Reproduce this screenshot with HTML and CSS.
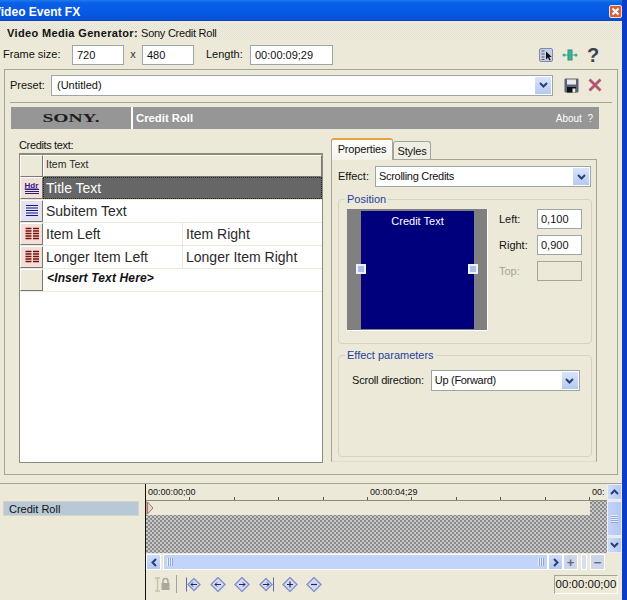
FILE: index.html
```html
<!DOCTYPE html>
<html lang="en">
<head>
<meta charset="utf-8">
<title>Video Event FX</title>
<link rel="stylesheet" href="styles.css">
</head>
<body>
<div class="app">
  <header class="titlebar">
    <span class="title">Video Event FX</span>
    <span class="close"><svg width="13" height="13" viewBox="0 0 13 13"><path d="M3.500 3.500l6 6M9.500 3.500l-6 6" stroke="#fff" stroke-width="2.200" fill="none"/></svg></span>
  </header>
  <div class="gen-band"><b>Video Media Generator:</b> <span class="gen-name">Sony Credit Roll</span></div>
  <div class="frame-row">
    <span class="lbl-frame">Frame size:</span>
    <span class="input w-52">720</span>
    <span class="times">x</span>
    <span class="input w-52">480</span>
    <span class="lbl-length">Length:</span>
    <span class="input w-83">00:00:09;29</span>
    <span class="frame-icons">
      <svg width="14" height="14" viewBox="0 0 14 14"><rect x=".5" y=".5" width="13" height="13" rx="1.500" fill="#c7cfe6" stroke="#7f8ab0"/><path d="M2.500 3h3M2.500 6h3M2.500 9h3M2.500 11.500h3" stroke="#556" fill="none"/><path d="M7 3.500v8l2-2 1.400 3 1.200-.6-1.300-2.800h2.500z" fill="#111"/></svg>
      <svg width="16" height="12" viewBox="0 0 16 12"><rect x="6" y="1" width="4" height="10" fill="#3fb596" stroke="#2a9478"/><path d="M1 6h14" stroke="#3fa68c"/><circle cx="2" cy="6" r="1.500" fill="#3fa68c"/><circle cx="14" cy="6" r="1.500" fill="#3fa68c"/></svg>
      <span class="help">?</span>
    </span>
  </div>
  <main class="panel">
    <div class="preset-row">
      <span class="lbl-preset">Preset:</span>
      <span class="combo combo-preset">(Untitled)<span class="drop"><svg width="9" height="6" viewBox="0 0 9 6"><path d="M1 1l3.500 3.500L8 1" stroke="#2b3f73" stroke-width="2" fill="none"/></svg></span></span>
      <svg class="icon-save" width="15" height="15" viewBox="0 0 15 15"><path d="M.5 1.500a1 1 0 0 1 1-1h12a1 1 0 0 1 1 1v12a1 1 0 0 1-1 1h-12a1 1 0 0 1-1-1z" fill="#5b6476"/><rect x="3" y="1.500" width="9" height="5" fill="#e9e9ee"/><rect x="3" y="9" width="9" height="5.500" fill="#111"/><rect x="8.500" y="10.500" width="3" height="4" fill="#eee"/></svg>
      <svg class="icon-x" width="14" height="14" viewBox="0 0 14 14"><path d="M1.500 1.500l11 11M12.500 1.500l-11 11" stroke="#b0566f" stroke-width="2.800" fill="none"/></svg>
    </div>
    <div class="rule"></div>
    <div class="sony-bar">
      <span class="sony-logo"><span class="sony-word">SONY.</span></span>
      <span class="sony-title">Credit Roll</span>
      <span class="sony-about">About &nbsp;?</span>
    </div>
    <div class="columns">
      <section class="credits">
        <div class="credits-label">Credits text:</div>
        <div class="grid">
          <div class="row row-head"><span class="rh"></span><span class="cell head">Item Text</span></div>
          <div class="row row-sel"><span class="rh rh-pink"><svg width="16" height="16" viewBox="0 0 16 16"><text x="0.500" y="7.500" class="hdr">Hdr</text><path d="M1 9.500h14M1 11.500h14M1 13.500h14" stroke="#2a1c88" fill="none"/></svg></span><span class="cell sel">Title Text</span></div>
          <div class="row"><span class="rh rh-blue"><svg width="16" height="16" viewBox="0 0 16 16"><path d="M2 2.500h12M2 5h12M2 7.500h12M2 10h12M2 12.500h12" stroke="#14148c" fill="none"/></svg></span><span class="cell">Subitem Text</span></div>
          <div class="row"><span class="rh rh-pink"><svg width="16" height="16" viewBox="0 0 16 16"><path d="M1.500 2.500h6M1.500 5h6M1.500 7.500h6M1.500 10h6M1.500 12.500h6M9 2.500h6M9 5h6M9 7.500h6M9 10h6M9 12.500h6" stroke="#7a1008" stroke-width="1.300" fill="none"/></svg></span><span class="cell c1">Item Left</span><span class="cell c2">Item Right</span></div>
          <div class="row"><span class="rh rh-pink"><svg width="16" height="16" viewBox="0 0 16 16"><path d="M1.500 2.500h6M1.500 5h6M1.500 7.500h6M1.500 10h6M1.500 12.500h6M9 2.500h6M9 5h6M9 7.500h6M9 10h6M9 12.500h6" stroke="#7a1008" stroke-width="1.300" fill="none"/></svg></span><span class="cell c1">Longer Item Left</span><span class="cell c2">Longer Item Right</span></div>
          <div class="row"><span class="rh"></span><span class="cell insert">&lt;Insert Text Here&gt;</span></div>
        </div>
      </section>
      <section class="props">
        <div class="tabs">
          <span class="tab tab-on">Properties</span>
          <span class="tab">Styles</span>
        </div>
        <div class="tab-body">
          <div class="effect-row">
            <span class="lbl-effect">Effect:</span>
            <span class="combo combo-effect">Scrolling Credits<span class="drop"><svg width="9" height="6" viewBox="0 0 9 6"><path d="M1 1l3.500 3.500L8 1" stroke="#2b3f73" stroke-width="2" fill="none"/></svg></span></span>
          </div>
          <fieldset class="group group-pos">
            <legend>Position</legend>
            <div class="pos-inner">
              <div class="preview">
                <div class="screen">Credit Text</div>
                <span class="handle handle-l"></span>
                <span class="handle handle-r"></span>
              </div>
              <div class="pos-fields">
                <label class="field"><span>Left:</span><span class="input small">0,100</span></label>
                <label class="field"><span>Right:</span><span class="input small">0,900</span></label>
                <label class="field disabled"><span>Top:</span><span class="input small off"></span></label>
              </div>
            </div>
          </fieldset>
          <fieldset class="group group-params">
            <legend>Effect parameters</legend>
            <div class="scroll-row">
              <span class="lbl-scroll">Scroll direction:</span>
              <span class="combo combo-scroll">Up (Forward)<span class="drop"><svg width="9" height="6" viewBox="0 0 9 6"><path d="M1 1l3.500 3.500L8 1" stroke="#2b3f73" stroke-width="2" fill="none"/></svg></span></span>
            </div>
          </fieldset>
        </div>
      </section>
    </div>
  </main>
  <section class="timeline">
    <aside class="tracks"><div class="track-name">Credit Roll</div></aside>
    <div class="tl-main">
      <div class="tl-top">
        <div class="tl-view">
          <div class="ruler"><span class="mark">00:00:00;00</span><span class="mark">00:00:04;29</span><span class="mark mark-end">00:</span></div>
          <div class="track"><div class="clip"><svg class="cursor" width="7" height="14" viewBox="0 0 7 14"><path d="M.5 1l5.500 6-5.500 6z" fill="#e4d6c4" stroke="#a07a66"/></svg></div></div>
        </div>
        <div class="vscroll">
          <span class="sbtn"><svg width="9" height="6" viewBox="0 0 9 6"><path d="M1 5l3.500-3.500L8 5" stroke="#2b3f73" stroke-width="2" fill="none"/></svg></span>
          <span class="vthumb"></span>
          <span class="sbtn"><svg width="9" height="6" viewBox="0 0 9 6"><path d="M1 1l3.500 3.500L8 1" stroke="#2b3f73" stroke-width="2" fill="none"/></svg></span>
        </div>
      </div>
      <div class="hscroll">
        <span class="hbtn"><svg width="6" height="9" viewBox="0 0 6 9"><path d="M5 1L1.500 4.500 5 8" stroke="#2b3f73" stroke-width="2" fill="none"/></svg></span>
        <span class="hthumb"></span>
        <span class="hbtn"><svg width="6" height="9" viewBox="0 0 6 9"><path d="M1 1l3.500 3.500L1 8" stroke="#2b3f73" stroke-width="2" fill="none"/></svg></span>
        <span class="hbtn zoom">+</span>
        <span class="hsplit"></span>
        <span class="hbtn zoom">&minus;</span>
      </div>
      <div class="tl-tools">
        <svg class="lock" width="17" height="15" viewBox="0 0 17 15"><path d="M1 1h5M1 14h5M3.500 1v13" stroke="#c6c3b4" stroke-width="1.500" fill="none"/><path d="M9 6V4a2.500 2.500 0 0 1 5 0v2" stroke="#aaa89c" stroke-width="1.500" fill="none"/><rect x="7.500" y="6" width="8" height="7" fill="#aaa89c"/></svg>
        <span class="tool-sep"></span>
        <svg class="nav" width="16" height="15" viewBox="0 0 16 15"><path d="M.5 .5v14" stroke="#5c6ab0"/><path d="M8 1.500l6 6-6 6-6-6z" fill="#d3d9f2" stroke="#8390cc" stroke-width="1.300"/><path d="M11 7.500H5M7 5.500l-2 2 2 2" stroke="#1f2a58" fill="none"/></svg>
        <svg class="nav" width="16" height="15" viewBox="0 0 16 15"><path d="M8 .5l7 7-7 7-7-7z" fill="#d3d9f2" stroke="#8390cc" stroke-width="1.300"/><path d="M11 7.500H5M7 5.500l-2 2 2 2" stroke="#1f2a58" fill="none"/></svg>
        <svg class="nav" width="16" height="15" viewBox="0 0 16 15"><path d="M8 .5l7 7-7 7-7-7z" fill="#d3d9f2" stroke="#8390cc" stroke-width="1.300"/><path d="M5 7.500h6M9 5.500l2 2-2 2" stroke="#1f2a58" fill="none"/></svg>
        <svg class="nav" width="16" height="15" viewBox="0 0 16 15"><path d="M15.500 .5v14" stroke="#5c6ab0"/><path d="M8 1.500l6 6-6 6-6-6z" fill="#d3d9f2" stroke="#8390cc" stroke-width="1.300"/><path d="M5 7.500h6M9 5.500l2 2-2 2" stroke="#1f2a58" fill="none"/></svg>
        <svg class="nav" width="16" height="15" viewBox="0 0 16 15"><path d="M8 .5l7 7-7 7-7-7z" fill="#d3d9f2" stroke="#8390cc" stroke-width="1.300"/><path d="M5 7.500h6M8 4.500v6" stroke="#1f2a58" stroke-width="1.200" fill="none"/></svg>
        <svg class="nav" width="16" height="15" viewBox="0 0 16 15"><path d="M8 .5l7 7-7 7-7-7z" fill="#d3d9f2" stroke="#8390cc" stroke-width="1.300"/><path d="M5 7.500h6" stroke="#1f2a58" stroke-width="1.200" fill="none"/></svg>
        <span class="timecode">00:00:00;00</span>
      </div>
    </div>
  </section>
</div>
</body>
</html>
```
FILE: styles.css
```css
* { box-sizing: border-box; }
html, body { margin: 0; padding: 0; }
body {
  width: 627px; height: 600px; overflow: hidden;
  background: #ece9d8; color: #111;
  font: 11px/13px "Liberation Sans", Arial, sans-serif;
}
.app { width: 627px; height: 600px; border-right: 5px solid #0a3cc8; display: flex; flex-direction: column; overflow: hidden; }
.titlebar {
  height: 21px; margin-right: -5px; flex: none; display: flex; align-items: center; justify-content: space-between;
  padding: 0 5px 0 0;
  background: linear-gradient(#1d7cf0 0, #0a5fe6 3px, #0558e4 14px, #0a4fd2 20px, #0a3cc0 21px);
}
.title { margin-left: -7px; color: #fff; font: bold 12px/16px "Liberation Sans", sans-serif; margin-top: 2px; }
.close { width: 13px; height: 13px; margin-top: 2px; border: 1px solid #f0e0dc; border-radius: 2px; background: #d8603a; display: flex; align-items: center; justify-content: center; }
.close svg { flex: none; }
.gen-band {
  flex: none; padding: 3px 0 0 7px; line-height: 15px; font-size: 11px;
  background: repeating-conic-gradient(#e2dfcc 0 25%, #f2efe4 0 50%) 0 0 / 2px 2px;
  margin-top: 2px; height: 17px;
}
.gen-band b { letter-spacing: .35px; }
.gen-name { letter-spacing: -.25px; }
.frame-row { height: 29px; flex: none; display: flex; align-items: flex-start; padding: 5px 0 0 3px; line-height: 19px; }
.input { display: block; height: 20px; background: #fff; border: 1px solid #9da6a6; padding-left: 4px; line-height: 18px; color: #111; }
.w-52 { width: 52px; }
.w-83 { width: 83px; }
.lbl-frame { width: 69px; }
.times { width: 18px; text-align: center; color: #333; }
.lbl-length { margin-left: 12px; width: 44px; }
.frame-icons { margin-left: 206px; display: flex; align-items: center; height: 20px; }
.frame-icons svg:first-child { margin-right: 9px; }
.help { margin-left: 9px; font: bold 20px/20px "Liberation Sans", sans-serif; color: #3b4252; }
.panel { width: 614px; height: 406px; flex: none; margin-left: 4px; border: 1px solid #a3a598; padding: 5px 5px 0 5px; }
.preset-row { height: 20px; display: flex; align-items: center; }
.lbl-preset { width: 41px; }
.combo { display: flex; align-items: center; justify-content: space-between; height: 21px; background: #fff; border: 1px solid #9da6a6; padding: 0 1px 0 3px; letter-spacing: -.3px; }
.combo-preset { width: 502px; letter-spacing: 0; padding-left: 5px; }
.drop { width: 16px; height: 17px; background: linear-gradient(#d9e5fb, #b5c9f2); display: flex; align-items: center; justify-content: center; }
.icon-save { margin-left: 11px; }
.icon-x { margin-left: 9px; }
.rule { height: 1px; background: #a3a598; margin: 7px 0 4px 0; width: 602px; }
.sony-bar { width: 588px; height: 22px; margin-left: 1px; display: flex; align-items: center; background: #969696; color: #fff; }
.sony-logo { width: 122px; height: 22px; flex: none; border-right: 2px solid #fff; text-align: center; color: #1c1c1c; font: bold 13px/22px "Liberation Serif", serif; }
.sony-word { display: inline-block; transform: scaleX(1.5); }
.sony-title { margin-left: 3px; padding-top: 1px; font-weight: bold; font-size: 11.300px; flex: 1; }
.sony-about { margin-right: 6px; font-size: 10px; }
.columns { display: flex; align-items: flex-start; margin-top: 10px; }
.credits { width: 305px; margin-left: 9px; flex: none; }
.credits-label { height: 14px; line-height: 13px; letter-spacing: -.35px; }
.grid { width: 304px; height: 310px; background: #fff; border: 1px solid #8c8c7c; border-top: 2px solid #8c8c7c; }
.row { height: 23px; display: flex; border-bottom: 1px solid #ece9d8; }
.row-head { height: 22px; border-bottom: 0; }
.rh { width: 23px; flex: none; background: #ece9d8; border: 1px solid #fff; border-right-color: #777; border-bottom-color: #777; display: flex; align-items: center; justify-content: center; }
.rh-pink { background: #f2dfd8; }
.rh-blue { background: #e4e2ee; }
.rh svg { flex: none; }
.hdr { font: bold 8px "Liberation Sans", sans-serif; fill: #2a1c88; text-decoration: underline; }
.cell { display: block; padding-left: 3px; font-size: 14px; line-height: 22px; color: #2a2a2a; flex: 1; }
.head { background: #ece9d8; border: 1px solid #fff; border-right-color: #777; border-bottom-color: #777; padding-left: 2px; font-size: 10.500px; line-height: 17px; }
.sel { background: #666; color: #fff; outline: 1px dotted #222; outline-offset: -1px; }
.c1 { flex: none; width: 140px; border-right: 1px solid #ece9d8; }
.insert { font: italic bold 12px/18px "Liberation Sans", sans-serif; letter-spacing: .15px; padding-left: 4px; color: #111; }
.props { width: 267px; margin-left: 7px; flex: none; }
.tabs { display: flex; height: 20px; align-items: flex-end; position: relative; z-index: 1; }
.tab { height: 18px; padding-top: 2px; line-height: 14px; width: 38px; border: 1px solid #a3a598; border-bottom: 0; border-radius: 3px 3px 0 0; background: #f0eee2; font-size: 11px; letter-spacing: -.15px; text-align: center; }
.tab-on { height: 22px; width: 62px; margin-bottom: -1px; background: #fff linear-gradient(#fff, #f4f2e8); border-top: 2px solid #e8a33c; padding-top: 1px; line-height: 17px; }
.tab-body { width: 266px; height: 303px; border: 1px solid #a3a598; border-bottom-color: #dedbc8; padding: 6px 5px 0 6px; }
.effect-row { display: flex; align-items: center; height: 21px; }
.lbl-effect { width: 37px; }
.combo-effect { width: 216px; margin-right: -6px; flex: none; }
.group { display: block; margin: 0; border: 1px solid #d5d2bf; border-radius: 4px; padding: 0; width: 254px; }
.group legend { margin-left: 6px; padding: 0 2px; color: #1f3f9c; line-height: 13px; font-size: 11px; }
.group-pos { height: 151px; margin-top: 6px; }
.group-params { height: 108px; margin-top: 5px; }
.pos-inner { display: flex; padding: 3px 0 0 8px; }
.preview { width: 141px; height: 122px; position: relative; background: #808080; padding: 2px 13px 1px 14px; border-right: 1px solid #fff; border-bottom: 1px solid #fff; flex: none; }
.screen { height: 100%; background: #00007c; color: #fff; text-align: center; padding-top: 3px; line-height: 14px; }
.handle { position: absolute; top: 55px; width: 10px; height: 10px; background: #a9bfe8; border: 2px solid #eef2fc; }
.handle-l { left: 9px; }
.handle-r { left: 121px; }
.pos-fields { margin-left: 11px; display: flex; flex-direction: column; gap: 6px; }
.field { display: flex; align-items: center; justify-content: space-between; width: 83px; height: 20px; }
.small { width: 45px; padding-left: 3px; }
.off { background: #ece9d8; height: 20px; border-color: #a6a696; }
.disabled { color: #a8a696; }
.scroll-row { display: flex; align-items: center; padding: 8px 0 0 13px; }
.lbl-scroll { letter-spacing: -.2px; }
.combo-scroll { width: 149px; margin-left: 7px; flex: none; }
.timeline { flex: none; height: 117px; margin-top: 8px; display: flex; border-top: 1px solid #a3a598; }
.tracks { width: 145px; flex: none; padding: 17px 0 0 3px; }
.track-name { width: 136px; height: 15px; background: #b9c8d6; border: 1px solid #d6d4c4; padding-left: 5px; line-height: 14px; font-size: 11px; }
.tl-main { width: 477px; flex: none; border-left: 1px solid #111; }
.tl-top { display: flex; height: 69px; }
.tl-view { width: 461px; flex: none; display: flex; flex-direction: column; background: repeating-conic-gradient(#8a8a8a 0 25%, #c8c8c8 0 50%) 0 0 / 4px 4px; }
.ruler { height: 17px; display: flex; padding-left: 2px; font-size: 9px; line-height: 13px; padding-top: 2px; background: #ece9d8 repeating-linear-gradient(90deg, transparent 0 43.400px, #555 43.400px 44.400px) 0 13px / 100% 3px no-repeat; border-bottom: 1px solid #8a8a78; }
.mark { width: 222px; flex: none; }
.mark-end { width: auto; }
.track { height: 52px; }
.clip { width: 444px; height: 14px; background: #ece9d8; border-left: 1px solid #d89a8a; }
.cursor { display: block; }
.vscroll { width: 15px; flex: none; display: flex; flex-direction: column; }
.sbtn { height: 16px; flex: none; display: flex; align-items: center; justify-content: center; background: linear-gradient(90deg, #cfdcf9, #b4c8f4); border: 1px solid #e8eefc; }
.vthumb { flex: 1; margin: 1px 0; border: 1px solid #e8eefc; background: repeating-linear-gradient(#e8eefc 0 1px, #8fa8d8 1px 2px) center / 7px 8px no-repeat, linear-gradient(90deg, #c2d3f8, #b4c8f4); }
.hscroll { height: 16px; display: flex; align-items: stretch; margin-top: 1px; padding-right: 17px; }
.hbtn { width: 15px; flex: none; display: flex; align-items: center; justify-content: center; background: linear-gradient(#cfdcf9, #b4c8f4); border: 1px solid #fff; }
.zoom { background: #ccd6e8; color: #5c6a88; font-weight: bold; font-size: 13px; }
.hthumb { flex: 1; background: repeating-linear-gradient(90deg, #e8eefc 0 1px, #8fa8d8 1px 2px) 3px center / 6px 8px no-repeat, repeating-linear-gradient(90deg, #e8eefc 0 1px, #8fa8d8 1px 2px) right 3px center / 6px 8px no-repeat, #c2d4fa; border: 1px solid #fff; margin-left: 2px; }
.hsplit { width: 6px; margin: 0 3px; background: #d6dff0; border: 1px solid #fff; }
.tl-tools { height: 31px; display: flex; align-items: center; padding: 0 4px 2px 8px; border-bottom: 1px solid #8a8a78; }
.lock { margin-right: 5px; }
.nav { margin-left: 8px; }
.tool-sep { width: 1px; height: 18px; background: #a3a598; margin-right: 1px; }
.timecode { margin-left: auto; width: 64px; height: 19px; border: 1px solid #a3a598; border-right-color: #fff; border-bottom-color: #fff; text-align: center; line-height: 17px; font-size: 11.500px; }
```
